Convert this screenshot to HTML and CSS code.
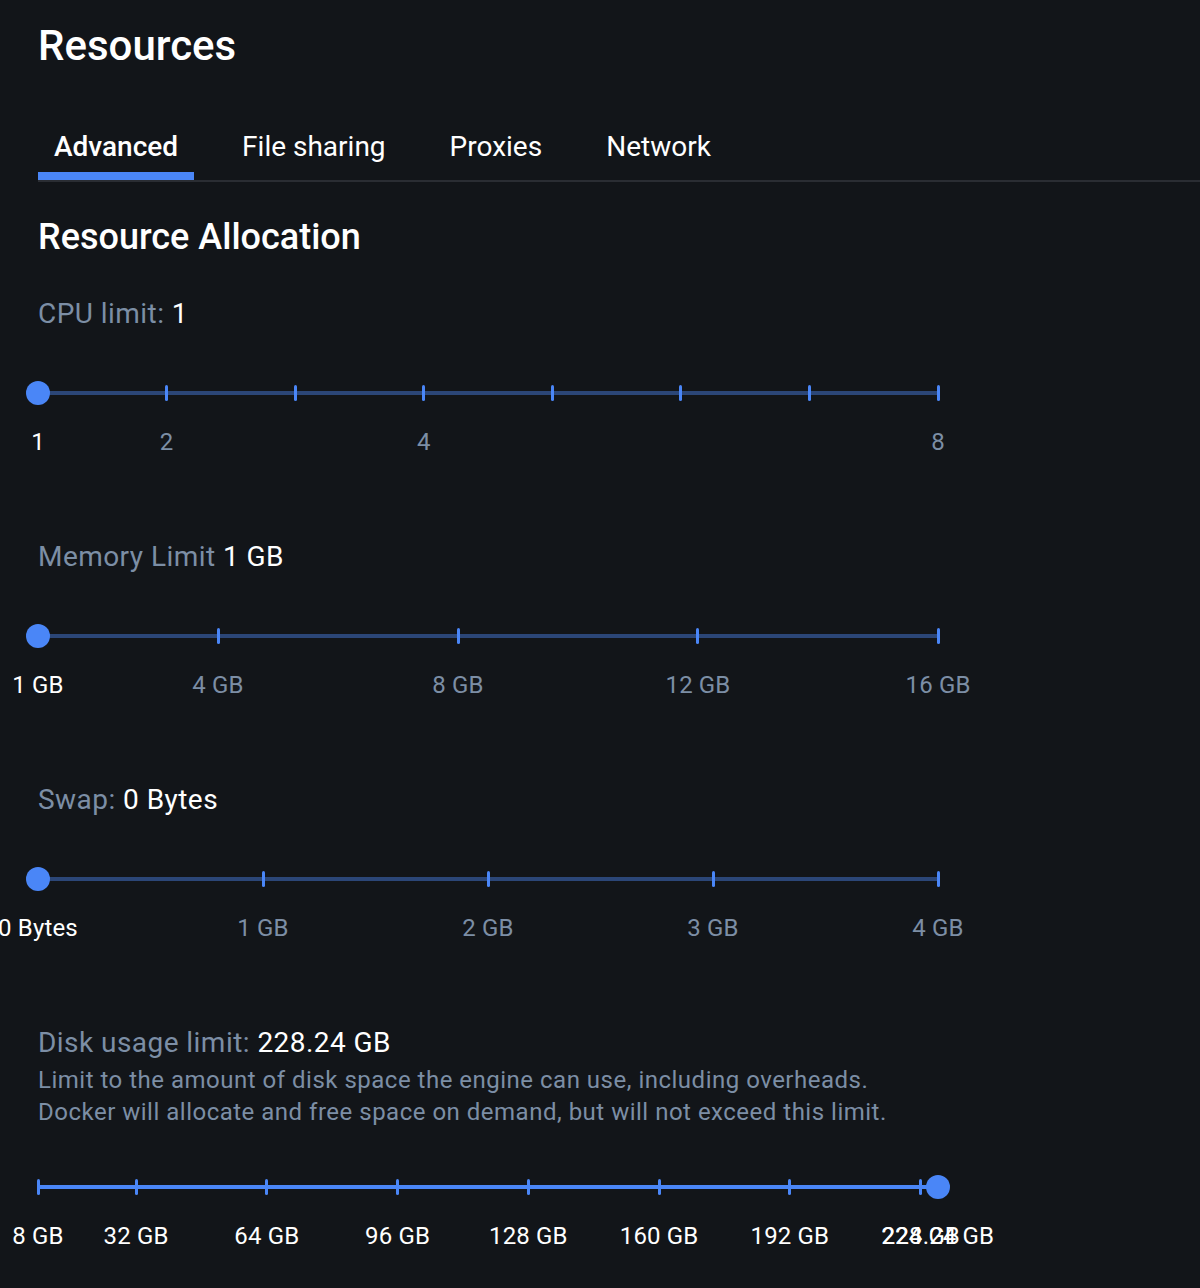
FILE: index.html
```html
<!DOCTYPE html>
<html>
<head>
<meta charset="utf-8">
<link rel="stylesheet" href="styles.css">
</head>
<body>
<div class="page">
  <h1 class="title">Resources</h1>
  <nav class="tabs">
    <div class="tab active">Advanced</div>
    <div class="tab">File sharing</div>
    <div class="tab">Proxies</div>
    <div class="tab">Network</div>
  </nav>
  <h2 class="section-title">Resource Allocation</h2>

  <div class="field">
    <div class="field-label">CPU limit: <span class="value">1</span></div>
    <div class="slider">
      <div class="track"></div>
      <span class="tick" style="left:0%"></span>
      <span class="tick" style="left:14.2857%"></span>
      <span class="tick" style="left:28.5714%"></span>
      <span class="tick" style="left:42.8571%"></span>
      <span class="tick" style="left:57.1429%"></span>
      <span class="tick" style="left:71.4286%"></span>
      <span class="tick" style="left:85.7143%"></span>
      <span class="tick" style="left:100%"></span>
      <span class="thumb" style="left:0%"></span>
    </div>
    <div class="marks">
      <span class="mark on" style="left:0%">1</span>
      <span class="mark" style="left:14.2857%">2</span>
      <span class="mark" style="left:42.8571%">4</span>
      <span class="mark" style="left:100%">8</span>
    </div>
  </div>

  <div class="field">
    <div class="field-label">Memory Limit <span class="value">1 GB</span></div>
    <div class="slider">
      <div class="track"></div>
      <span class="tick" style="left:0%"></span>
      <span class="tick" style="left:20%"></span>
      <span class="tick" style="left:46.6667%"></span>
      <span class="tick" style="left:73.3333%"></span>
      <span class="tick" style="left:100%"></span>
      <span class="thumb" style="left:0%"></span>
    </div>
    <div class="marks">
      <span class="mark on" style="left:0%">1 GB</span>
      <span class="mark" style="left:20%">4 GB</span>
      <span class="mark" style="left:46.6667%">8 GB</span>
      <span class="mark" style="left:73.3333%">12 GB</span>
      <span class="mark" style="left:100%">16 GB</span>
    </div>
  </div>

  <div class="field">
    <div class="field-label">Swap: <span class="value">0 Bytes</span></div>
    <div class="slider">
      <div class="track"></div>
      <span class="tick" style="left:0%"></span>
      <span class="tick" style="left:25%"></span>
      <span class="tick" style="left:50%"></span>
      <span class="tick" style="left:75%"></span>
      <span class="tick" style="left:100%"></span>
      <span class="thumb" style="left:0%"></span>
    </div>
    <div class="marks">
      <span class="mark on" style="left:0%">0 Bytes</span>
      <span class="mark" style="left:25%">1 GB</span>
      <span class="mark" style="left:50%">2 GB</span>
      <span class="mark" style="left:75%">3 GB</span>
      <span class="mark" style="left:100%">4 GB</span>
    </div>
  </div>

  <div class="field">
    <div class="field-label">Disk usage limit: <span class="value">228.24 GB</span></div>
    <p class="desc">Limit to the amount of disk space the engine can use, including overheads.<br>Docker will allocate and free space on demand, but will not exceed this limit.</p>
    <div class="slider slider-disk">
      <div class="track"></div>
      <div class="track-fill" style="width:100%"></div>
      <span class="tick" style="left:0%"></span>
      <span class="tick" style="left:10.8972%"></span>
      <span class="tick" style="left:25.4268%"></span>
      <span class="tick" style="left:39.9564%"></span>
      <span class="tick" style="left:54.4860%"></span>
      <span class="tick" style="left:69.0156%"></span>
      <span class="tick" style="left:83.5452%"></span>
      <span class="tick" style="left:98.0748%"></span>
      <span class="thumb" style="left:100%"></span>
    </div>
    <div class="marks">
      <span class="mark on" style="left:0%">8 GB</span>
      <span class="mark on" style="left:10.8972%">32 GB</span>
      <span class="mark on" style="left:25.4268%">64 GB</span>
      <span class="mark on" style="left:39.9564%">96 GB</span>
      <span class="mark on" style="left:54.4860%">128 GB</span>
      <span class="mark on" style="left:69.0156%">160 GB</span>
      <span class="mark on" style="left:83.5452%">192 GB</span>
      <span class="mark on" style="left:98.0748%">224 GB</span>
      <span class="mark on" style="left:100%">228.24 GB</span>
    </div>
  </div>
</div>
</body>
</html>
```

FILE: styles.css
```css
html, body {
  margin: 0;
  padding: 0;
  background: #121519;
}
body {
  font-family: Roboto, "Liberation Sans", sans-serif;
  color: #ffffff;
  overflow: hidden;
  height: 1288px;
}
.page {
  padding: 22px 0 0 38px;
}
.title {
  margin: 0;
  font-size: 42px;
  line-height: 48px;
  font-weight: 500;
}
.tabs {
  display: flex;
  gap: 32px;
  margin-top: 48px;
  border-bottom: 2px solid #2a2d33;
}
.tab {
  font-size: 28px;
  line-height: 36px;
  padding: 11px 16px 7px;
  border-bottom: 8px solid transparent;
  color: #ffffff;
}
.tab.active {
  font-weight: 500;
  border-bottom-color: #4a86f7;
}
.section-title {
  margin: 33px 0 0;
  font-size: 36px;
  line-height: 44px;
  font-weight: 500;
}
.field {
  margin-top: 37px;
  width: 900px;
}
.field + .field {
  margin-top: 79px;
}
.field-label {
  font-size: 28px;
  line-height: 36px;
  letter-spacing: 0.45px;
  color: #7c8ea5;
}
.value {
  color: #ffffff;
}
.desc {
  margin: 3px 0 0;
  font-size: 24px;
  line-height: 32px;
  letter-spacing: 0.5px;
  color: #7c8ea5;
  white-space: nowrap;
}
.slider {
  position: relative;
  height: 24px;
  margin-top: 49px;
}
.slider-disk {
  margin-top: 47px;
}
.track {
  position: absolute;
  left: 0;
  right: 0;
  top: 10px;
  height: 4px;
  background: #2b4677;
}
.track-fill {
  position: absolute;
  left: 0;
  top: 10px;
  height: 4px;
  background: #4a86f7;
}
.tick {
  position: absolute;
  top: 4px;
  width: 3px;
  height: 16px;
  margin-left: -1.5px;
  border-radius: 1.5px;
  background: #4a86f7;
}
.thumb {
  position: absolute;
  top: 0;
  width: 24px;
  height: 24px;
  margin-left: -12px;
  border-radius: 50%;
  background: #4a86f7;
}
.marks {
  position: relative;
  height: 36px;
  margin-top: 19px;
}
.mark {
  position: absolute;
  top: 0;
  transform: translateX(-50%);
  white-space: nowrap;
  font-size: 24px;
  line-height: 36px;
  letter-spacing: 0.15px;
  color: #7c8ea5;
}
.mark.on {
  color: #ffffff;
}
```
